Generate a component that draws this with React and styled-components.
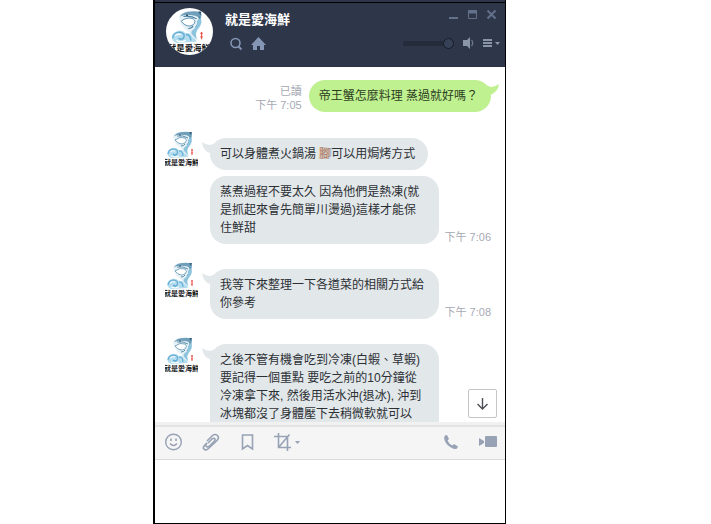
import React, { Component } from 'react';
import styled, { createGlobalStyle } from 'styled-components';

const GlobalStyle = createGlobalStyle`
  * {
    box-sizing: border-box;
  }
  body {
    margin: 0;
    background: #fff;
    font-family: 'Liberation Sans', 'Noto Sans CJK TC', sans-serif;
    font-size: 12px;
  }
  button {
    display: flex;
    padding: 0;
    border: 0;
    background: none;
    color: inherit;
  }
  svg {
    display: block;
  }
`;

const Page = styled.div`
  display: flex;
  height: 100vh;
  padding: 0 205px 0 153px;
`;

const ChatWindow = styled.main`
  flex: 1;
  min-width: 0;
  display: flex;
  flex-direction: column;
  border: solid #000;
  border-width: 0 1px 1px 2px;
`;

const TitleStrip = styled.div`
  height: 3px;
  flex: none;
  background: #2e364a;
  border-bottom: 1px solid #000;
`;

const Header = styled.header`
  display: flex;
  flex: none;
  height: 64px;
  padding: 5px 5px 0 11px;
  background: #2e364a;
  border-bottom: 1px solid #293144;
`;

const RoundAvatar = styled.div`
  width: 47px;
  height: 47px;
  border-radius: 50%;
  overflow: hidden;
  background: #fff;
`;

const HeaderInfo = styled.div`
  flex: 1;
  margin-left: 12px;
  color: #8496b4;
`;

const Title = styled.h1`
  margin: 2px 0 7px;
  font-size: 13px;
  line-height: 20px;
  font-weight: bold;
  color: #fff;
`;

const IconRow = styled.div`
  display: flex;
  align-items: center;
  gap: ${props => props.$gap}px;
  padding: ${props => props.$padding || '0'};
`;

const HeaderControls = styled.div`
  display: flex;
  flex-direction: column;
  align-items: flex-end;
  gap: 17px;
  padding-top: 2px;
  color: #63708a;
`;

const Volume = styled.input`
  appearance: none;
  width: 51px;
  height: 12px;
  margin: 0;
  background: linear-gradient(#242b3a, #242b3a) center / 100% 5px no-repeat;
  border-radius: 3px;

  &::-webkit-slider-thumb {
    appearance: none;
    width: 11px;
    height: 11px;
    border: 1px solid #181d28;
    border-radius: 50%;
    background: #364057;
  }
`;

const Chat = styled.section`
  position: relative;
  flex: 1;
  min-height: 0;
  overflow: hidden;
  padding: 13px 14px 0 10px;
  background: #fff;
`;

const Outgoing = styled.div`
  display: flex;
  justify-content: flex-end;
  align-items: flex-end;
  gap: 7px;
  margin-bottom: 19px;
`;

const Incoming = styled.div`
  display: flex;
  margin-bottom: 18px;
`;

const SmallAvatar = styled.div`
  flex: none;
  width: 33px;
  height: 38px;
  margin-right: 12px;
`;

const Bubbles = styled.div`
  flex: 1;
  display: flex;
  flex-direction: column;
  gap: 6px;
  padding-top: 7px;
`;

const BubbleRow = styled.div`
  display: flex;
  align-items: flex-end;
  justify-content: space-between;
`;

const Bubble = styled.div`
  position: relative;
  max-width: 229px;
  padding: 7px 13px 7px 10px;
  border-radius: ${props => (props.$open ? '16px 16px 0 0' : '16px')};
  background: ${props => (props.$mine ? '#c0f190' : '#e2e7ea')};
  color: ${props => (props.$mine ? '#2c3d1e' : '#2c3034')};
  line-height: 18px;
  white-space: pre;
  ${props => props.$wide && 'width: 229px;'}
`;

const Tail = styled.svg`
  position: absolute;
  top: 4px;
  ${props => (props.$mine ? 'right: -8px;' : 'left: -8px;')}
`;

const Time = styled.div`
  font-size: 11px;
  line-height: 14px;
  color: #a6a9b4;
  text-align: right;
  white-space: nowrap;
`;

const Fringed = styled.span`
  color: #a47a70;
  text-shadow: -1px 0 #f0c890, 1px 0 #a8c8e8;
`;

const ScrollDown = styled.button`
  && {
    position: absolute;
    right: 8px;
    bottom: 4px;
    width: 29px;
    height: 29px;
    align-items: center;
    justify-content: center;
    border: 1px solid #c4c5c8;
    border-radius: 2px;
    background: #fff;
    color: #4c4f55;
  }
`;

const Toolbar = styled.div`
  flex: none;
  display: flex;
  justify-content: space-between;
  height: 38px;
  padding: 0 8px 0 10px;
  border-top: 3px solid #f1f1f2;
  border-bottom: 1px solid #d9dadc;
  background: linear-gradient(#e3e3e4 2px, #f5f5f6 2px);
  color: #97a2b4;
`;

const Message = styled.textarea`
  flex: none;
  height: 63px;
  padding: 8px 10px;
  border: 0;
  outline: 0;
  resize: none;
  background: #fff;
  font: inherit;
`;

// Jumping fish over a wave, shop name underneath
const Logo = ({ width, height, viewBox }) => (
  <svg width={width} height={height} viewBox={viewBox}>
    <path d="M8 5 Q11 1 17 1 H25 Q28 4 27 10 Q26 15 22 19 L24 25 H15 Q18 21 17 18 Q11 15 9 9 Z" fill="#e6f1f6" />
    <path d="M9 5 Q12 1 18 1 Q25 0 27 3 L26 9 Q25 4 19 4 Q14 3 9 5 Z" fill="#6f9fba" />
    <path d="M10 9 Q15 5 20 7 Q23 9 20 12 Q15 15 10 9 Z" fill="#fff" stroke="#5a90b0" strokeWidth="0.8" />
    <path d="M12 5 Q18 4 23 7 M25 5 Q26 10 22 14 M20 13 Q19 15 16 15" fill="none" stroke="#4a82a3" strokeWidth="0.9" />
    <path d="M23 9 Q24 13 20 16 Q17 18 20 21 L23 24 Q21 18 25 14 Q28 10 26 6 Z" fill="#8cc3dd" />
    <path d="M24 1 L27 1 L26 4 Z" fill="#35607c" />
    <circle cx="15" cy="4" r="0.8" fill="#24485e" />
    <path d="M3 25 Q1 20 5 18 Q10 15 14 19 Q18 18 19 22 Q22 23 23 26 L6 27 Z" fill="#b3dcef" />
    <path d="M3 23 Q4 18 9 18 Q14 19 12 23 Q10 25 8 23 M14 20 Q18 20 18 25" fill="none" stroke="#62abd1" strokeWidth="1.2" />
    <path d="M5 21 Q7 19 10 20 M6 25 Q10 27 14 25" fill="none" stroke="#fff" strokeWidth="1" />
    <path d="M26 19 H28 M27 18 V24 M26 22 H28" fill="none" stroke="#e8564c" strokeWidth="1" />
    <text
      x="16.5"
      y="34"
      textAnchor="middle"
      fontFamily="Noto Sans CJK TC, sans-serif"
      fontWeight="bold"
      fontSize="7"
      fill="#17191c"
    >
      就是愛海鮮
    </text>
  </svg>
);

const Caret = ({ color }) => (
  <svg width="5" height="3" viewBox="0 0 5 3" fill={color || 'currentColor'}>
    <path d="M0 0H5L2.5 3Z" />
  </svg>
);

const MessageBubble = ({ mine, tail, wide, open, children }) => (
  <Bubble $mine={mine} $wide={wide} $open={open}>
    {tail && (
      <Tail $mine={mine} width="18" height="14" viewBox="0 0 18 14">
        {mine ? (
          <path d="M18 0 Q14 3 10 3 L4 1 V14 L8 11 Q17 9 18 0Z" fill="#c0f190" />
        ) : (
          <path d="M0 0 Q4 3 8 3 L14 1 V14 L8 11 Q1 9 0 0Z" fill="#e2e7ea" />
        )}
      </Tail>
    )}
    {children}
  </Bubble>
);

const groups = [
  [
    {
      text: (
        <React.Fragment>
          可以身體煮火鍋湯 <Fringed>腳</Fringed>可以用焗烤方式
        </React.Fragment>
      )
    },
    {
      text: '蒸煮過程不要太久 因為他們是熱凍(就\n是抓起來會先簡單川燙過)這樣才能保\n住鮮甜',
      time: '下午 7:06',
      wide: true
    }
  ],
  [
    {
      text: '我等下來整理一下各道菜的相關方式給\n你參考',
      time: '下午 7:08',
      wide: true
    }
  ],
  [
    {
      text:
        '之後不管有機會吃到冷凍(白蝦、草蝦)\n要記得一個重點 要吃之前的10分鐘從\n冷凍拿下來, 然後用活水沖(退冰), 沖到\n冰塊都沒了身體壓下去稍微軟就可以',
      wide: true,
      open: true
    }
  ]
];

export default class App extends Component {
  state = {
    volume: 100,
    draft: ''
  };

  render() {
    const { volume, draft } = this.state;

    return (
      <Page>
        <GlobalStyle />
        <ChatWindow>
          <TitleStrip />
          <Header>
            <RoundAvatar>
              <Logo width="47" height="47" viewBox="-1 -2 36 39" />
            </RoundAvatar>
            <HeaderInfo>
              <Title>就是愛海鮮</Title>
              <IconRow $gap={8} $padding="0 0 0 4px">
                <button aria-label="Search">
                  <svg width="14" height="14" viewBox="0 0 14 14" fill="none" stroke="currentColor">
                    <circle cx="6.5" cy="6" r="4.5" strokeWidth="1.6" />
                    <path d="M9.5 9.5L12.5 12.5" strokeWidth="1.8" />
                  </svg>
                </button>
                <button aria-label="Home">
                  <svg width="15" height="14" viewBox="0 0 15 14" fill="currentColor">
                    <path d="M7.5 0L15 8H13V13H9V9H6V13H2V8H0Z" />
                  </svg>
                </button>
              </IconRow>
            </HeaderInfo>
            <HeaderControls>
              <IconRow $gap={10} $padding="0 4px 0 0">
                <button aria-label="Minimize">
                  <svg width="9" height="10" viewBox="0 0 9 10" fill="currentColor">
                    <path d="M0 7H9V9H0Z" />
                  </svg>
                </button>
                <button aria-label="Maximize">
                  <svg width="9" height="10" viewBox="0 0 9 10" fill="none" stroke="currentColor">
                    <path d="M0.5 0.5H8.5V8.5H0.5Z" />
                    <path d="M0 2H9" strokeWidth="3" />
                  </svg>
                </button>
                <button aria-label="Close">
                  <svg width="9" height="10" viewBox="0 0 9 10" fill="none" stroke="currentColor">
                    <path d="M0.5 0.5L8.5 8.5M8.5 0.5L0.5 8.5" strokeWidth="2" />
                  </svg>
                </button>
              </IconRow>
              <IconRow $gap={9}>
                <Volume
                  type="range"
                  aria-label="Volume"
                  value={volume}
                  onChange={e => this.setState({ volume: e.target.value })}
                />
                <button aria-label="Mute">
                  <svg width="11" height="12" viewBox="0 0 11 12" fill="#8a96a8">
                    <path d="M0 3H4L7 0V12L4 9H0Z" />
                    <path d="M8.5 3Q11 6 8.5 9" fill="none" stroke="#68758b" strokeWidth="1.3" />
                  </svg>
                </button>
                <button aria-label="Menu">
                  <IconRow $gap={3}>
                    <svg width="9" height="8" viewBox="0 0 9 8" fill="#8a96a8">
                      <path d="M0 0H9V2H0ZM0 3H9V5H0ZM0 6H9V8H0Z" />
                    </svg>
                    <Caret color="#8a96a8" />
                  </IconRow>
                </button>
              </IconRow>
            </HeaderControls>
          </Header>

          <Chat>
            <Outgoing>
              <Time>
                已讀
                <br />
                下午 7:05
              </Time>
              <MessageBubble mine tail>
                帝王蟹怎麼料理 蒸過就好嗎？
              </MessageBubble>
            </Outgoing>
            {groups.map((messages, i) => (
              <Incoming key={i}>
                <SmallAvatar>
                  <Logo width="33" height="38" viewBox="0 0 33 38" />
                </SmallAvatar>
                <Bubbles>
                  {messages.map((message, j) => (
                    <BubbleRow key={j}>
                      <MessageBubble tail={j === 0} wide={message.wide} open={message.open}>
                        {message.text}
                      </MessageBubble>
                      {message.time ? <Time>{message.time}</Time> : null}
                    </BubbleRow>
                  ))}
                </Bubbles>
              </Incoming>
            ))}
            <ScrollDown aria-label="Scroll to latest">
              <svg width="13" height="13" viewBox="0 0 13 13" fill="none" stroke="currentColor" strokeWidth="1.4">
                <path d="M6.5 1V12M1.5 7L6.5 12L11.5 7" />
              </svg>
            </ScrollDown>
          </Chat>

          <Toolbar>
            <IconRow $gap={20}>
              <button aria-label="Stickers">
                <svg width="17" height="18" viewBox="0 0 17 18" fill="none" stroke="currentColor">
                  <circle cx="8.5" cy="9" r="7.8" strokeWidth="1.4" />
                  <path d="M6 5.5V8M11 5.5V8" strokeWidth="1.6" />
                  <path d="M5 10.5Q8.5 14.5 12 10.5" strokeWidth="1.4" />
                </svg>
              </button>
              <button aria-label="Attach file">
                <svg width="18" height="18" viewBox="0 0 18 18" fill="none" stroke="currentColor" strokeWidth="1.6">
                  <path d="M6 10L10 6Q12 4.5 13 6Q13.5 7 12.500 8L7 13.500Q5 14.500 4 13Q3.500 11.500 5 10" />
                  <path d="M5 10L2.500 12.500Q0.500 15 2 16Q4 18 6.500 15.500L15 7.500Q17.500 4.500 15.500 2.500Q13 0.500 10.500 2.500L5 8" />
                </svg>
              </button>
              <button aria-label="Keep">
                <svg width="14" height="18" viewBox="0 0 14 18" fill="none" stroke="currentColor" strokeWidth="1.6">
                  <path d="M2.500 2H12.500V16L7.500 12.500L2.500 16Z" />
                </svg>
              </button>
              <button aria-label="Capture">
                <IconRow $gap={3}>
                  <svg width="18" height="18" viewBox="0 0 18 18" fill="none" stroke="currentColor" strokeWidth="1.6">
                    <path d="M0 3.500H13.500V18M4.500 0V14.500H17M15.500 1.500L4.500 14.500" />
                  </svg>
                  <Caret />
                </IconRow>
              </button>
            </IconRow>
            <IconRow $gap={20}>
              <button aria-label="Voice call">
                <svg width="16" height="16" viewBox="0 0 16 16" fill="currentColor">
                  <path d="M2 1.500L4 1L6 5L4.500 6.500Q6 10 9.500 11.500L11 10L15 12.500L14 14.500Q12 16 8 13.500Q3 10.500 1.500 6Q0.500 3 2 1.500Z" />
                </svg>
              </button>
              <button aria-label="Video call">
                <svg width="18" height="12" viewBox="0 0 18 12" fill="currentColor">
                  <path d="M0 2L5 5V7L0 10Z" />
                  <rect x="6" y="0" width="12" height="11" rx="1" />
                </svg>
              </button>
            </IconRow>
          </Toolbar>
          <Message
            aria-label="Message"
            value={draft}
            onChange={e => this.setState({ draft: e.target.value })}
          />
        </ChatWindow>
      </Page>
    );
  }
}
